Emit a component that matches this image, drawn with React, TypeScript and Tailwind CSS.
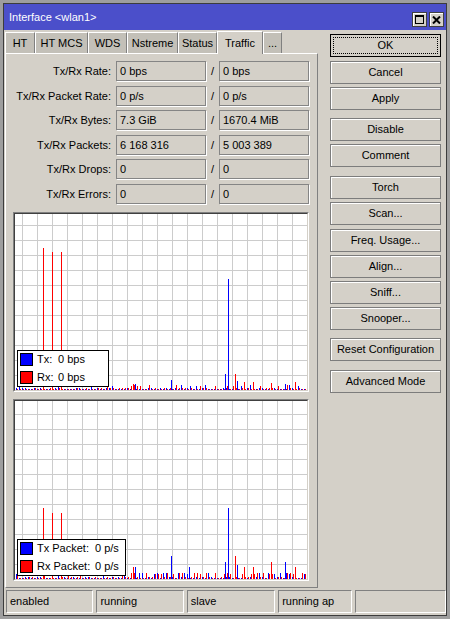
import React from 'react';

type Bar = { x: number; h: number; c: 'b' | 'r' };

function makeBars(seed: number, W: number, prob: number, smallH: number, spikes: Bar[], leftLow: number): Bar[] {
  let s = seed;
  const rnd = () => {
    s = (s * 16807) % 2147483647;
    return s / 2147483647;
  };
  const out: Bar[] = [];
  for (let x = 1; x < W - 1; x += 3) {
    const p = x < leftLow ? prob * 0.4 : prob;
    const hb = rnd() < p ? smallH + Math.floor(rnd() * 2) : 1 + Math.floor(rnd() * 1.6);
    const hr = rnd() < p ? smallH + Math.floor(rnd() * 2) : 1 + Math.floor(rnd() * 1.6);
    out.push({ x, h: hb, c: 'b' });
    out.push({ x: x + 1, h: hr, c: 'r' });
  }
  return [...out, ...spikes];
}

const bars1 = makeBars(
  12345,
  292,
  0.18,
  4,
  [
    { x: 28, h: 142, c: 'r' },
    { x: 37, h: 138, c: 'r' },
    { x: 46, h: 138, c: 'r' },
    { x: 213, h: 111, c: 'b' },
    { x: 156, h: 10, c: 'b' },
    { x: 210, h: 16, c: 'b' },
    { x: 220, h: 16, c: 'r' },
    { x: 222, h: 9, c: 'b' },
    { x: 229, h: 8, c: 'r' },
    { x: 238, h: 8, c: 'r' },
    { x: 256, h: 7, c: 'r' },
    { x: 280, h: 8, c: 'r' },
    { x: 270, h: 6, c: 'b' },
    { x: 118, h: 6, c: 'r' },
    { x: 120, h: 6, c: 'b' },
  ],
  96
);

const bars2 = makeBars(
  777,
  292,
  0.35,
  5,
  [
    { x: 28, h: 71, c: 'r' },
    { x: 37, h: 66, c: 'r' },
    { x: 46, h: 66, c: 'r' },
    { x: 213, h: 71, c: 'b' },
    { x: 156, h: 23, c: 'b' },
    { x: 210, h: 17, c: 'b' },
    { x: 220, h: 23, c: 'r' },
    { x: 222, h: 14, c: 'b' },
    { x: 229, h: 12, c: 'r' },
    { x: 238, h: 12, c: 'r' },
    { x: 256, h: 17, c: 'r' },
    { x: 270, h: 17, c: 'b' },
    { x: 280, h: 12, c: 'r' },
    { x: 174, h: 12, c: 'b' },
    { x: 118, h: 12, c: 'r' },
    { x: 120, h: 12, c: 'b' },
  ],
  110
);

function ChartSvg({ W, H, bars }: { W: number; H: number; bars: Bar[] }) {
  const vx: number[] = [];
  for (let x = W - 15; x > 0; x -= 15) vx.push(x);
  const hy: number[] = [];
  for (let y = H - 15; y > 0; y -= 15) hy.push(y);
  return (
    <svg width={W} height={H} className="block">
      <rect x={0} y={0} width={W} height={H} fill="#ffffff" />
      {vx.map((x) => (
        <rect key={'v' + x} x={x} y={0} width={1} height={H} fill="#cccccc" />
      ))}
      {hy.map((y) => (
        <rect key={'h' + y} x={0} y={y} width={W} height={1} fill="#cccccc" />
      ))}
      {bars.map((b, i) => (
        <rect key={i} x={b.x} y={H - b.h} width={1} height={b.h} fill={b.c === 'b' ? '#0000ff' : '#ff0000'} />
      ))}
    </svg>
  );
}

function Legend({ rows, labelW, w }: { rows: [string, string, string][]; labelW: string; w: string }) {
  return (
    <div className={'absolute left-[2px] bottom-[3px] border border-black bg-white p-[2px] flex flex-col gap-[5px] ' + w}>
      {rows.map(([lab, val, col]) => (
        <div key={lab} className="flex items-center h-[13px]">
          <div className={'w-[13px] h-[13px] border border-black ' + col} />
          <div className={'ml-[4px] text-[11px] leading-none ' + labelW}>{lab}</div>
          <div className="text-[11px] leading-none">{val}</div>
        </div>
      ))}
    </div>
  );
}

function Field({ v }: { v: string }) {
  return (
    <div className="w-[90px] h-[20px] border border-[#858585] shadow-[1px_1px_0_#ffffff] bg-[#d4d0c8] flex items-center pl-[3px] text-[11px]">
      {v}
    </div>
  );
}

function Btn({ label, m }: { label: string; m: string }) {
  return (
    <div className={'h-[23px] border border-[#7c7c7c] bg-[#d4d0c8] shadow-[inset_1px_1px_0_#ffffff] flex items-center justify-center text-[11px] ' + m}>
      {label}
    </div>
  );
}

const rows: [string, string, string, string][] = [
  ['Tx/Rx Rate:', '0 bps', '0 bps', 'mt-0'],
  ['Tx/Rx Packet Rate:', '0 p/s', '0 p/s', 'mt-[5px]'],
  ['Tx/Rx Bytes:', '7.3 GiB', '1670.4 MiB', 'mt-[4px]'],
  ['Tx/Rx Packets:', '6 168 316', '5 003 389', 'mt-[5px]'],
  ['Tx/Rx Drops:', '0', '0', 'mt-[4px]'],
  ['Tx/Rx Errors:', '0', '0', 'mt-[5px]'],
];

const tabs: { t: string; w: string; sel?: boolean }[] = [
  { t: 'HT', w: 'w-[30px]' },
  { t: 'HT MCS', w: 'w-[53px]' },
  { t: 'WDS', w: 'w-[39px]' },
  { t: 'Nstreme', w: 'w-[51px]' },
  { t: 'Status', w: 'w-[39px]' },
  { t: 'Traffic', w: 'w-[46px]', sel: true },
  { t: '...', w: 'w-[19px]' },
];

const buttons: [string, string][] = [
  ['Cancel', 'mt-[4px]'],
  ['Apply', 'mt-[3px]'],
  ['Disable', 'mt-[8px]'],
  ['Comment', 'mt-[3px]'],
  ['Torch', 'mt-[9px]'],
  ['Scan...', 'mt-[3px]'],
  ['Freq. Usage...', 'mt-[4px]'],
  ['Align...', 'mt-[3px]'],
  ['Sniff...', 'mt-[3px]'],
  ['Snooper...', 'mt-[3px]'],
  ['Reset Configuration', 'mt-[8px]'],
  ['Advanced Mode', 'mt-[9px]'],
];

export default function App() {
  return (
    <div className="w-[450px] h-[619px] bg-[#9e9e9e] p-[3px] text-black [font-family:'Liberation_Sans',Arial,sans-serif]">
      <div className="w-full h-full border border-[#3c3c3c] bg-[#d4d0c8] flex flex-col">
        {/* title */}
        <div className="h-[26px] bg-[#4b4fca] flex items-center pl-[5px] pr-[2px]">
          <div className="text-white text-[11px] flex-1">Interface &lt;wlan1&gt;</div>
          <div className="flex gap-[2px] mt-[5px]">
            <div className="w-[15px] h-[15px] bg-[#d4d0c8] border border-[#404040] shadow-[inset_1px_1px_0_#ffffff] flex items-center justify-center">
              <svg width="9" height="9" viewBox="0 0 9 9">
                <rect x="0.5" y="0.5" width="8" height="8" fill="none" stroke="#000" />
                <rect x="0" y="0" width="9" height="2" fill="#000" />
              </svg>
            </div>
            <div className="w-[15px] h-[15px] bg-[#d4d0c8] border border-[#404040] shadow-[inset_1px_1px_0_#ffffff] flex items-center justify-center">
              <svg width="9" height="8" viewBox="0 0 9 8">
                <path d="M1 0.5 L8 7.5 M8 0.5 L1 7.5" stroke="#000" strokeWidth="2" />
              </svg>
            </div>
          </div>
        </div>
        {/* body */}
        <div className="flex-1 flex flex-col">
          <div className="flex">
            <div className="w-[314px] pl-[1px] flex flex-col">
              <div className="mt-[1px] h-[22px] flex items-end">
                {tabs.map((t) =>
                  t.sel ? (
                    <div
                      key={t.t}
                      className={'relative z-10 -mb-[1px] h-[23px] bg-[#d4d0c8] border-t border-l border-white border-r border-r-[#808080] flex items-start justify-center pt-[3px] text-[11px] ' + t.w}
                    >
                      {t.t}
                    </div>
                  ) : (
                    <div
                      key={t.t}
                      className={'h-[21px] bg-[#c3c0b8] border-t border-l border-white border-r border-r-[#808080] flex items-center justify-center text-[11px] ' + t.w}
                    >
                      {t.t}
                    </div>
                  )
                )}
              </div>
              <div className="h-[535px] border-t border-l border-white border-r border-b border-r-[#808080] border-b-[#808080] pt-[7px]">
                <div className="flex flex-col">
                  {rows.map(([l, a, b, m]) => (
                    <div key={l} className={'flex items-center h-[20px] ' + m}>
                      <div className="w-[105px] text-right text-[11px]">{l}</div>
                      <div className="ml-[5px]">
                        <Field v={a} />
                      </div>
                      <div className="w-[13px] text-center text-[11px]">/</div>
                      <Field v={b} />
                    </div>
                  ))}
                </div>
                <div className="mt-[8px] ml-[7px] w-[296px] h-[180px] border-t border-l border-[#808080] border-b border-r border-b-white border-r-white">
                  <div className="relative w-full h-full border-t border-l border-[#404040] border-b border-r border-b-[#d4d0c8] border-r-[#d4d0c8]">
                    <ChartSvg W={292} H={176} bars={bars1} />
                    <Legend
                      w="w-[92px]"
                      labelW="w-[21px]"
                      rows={[
                        ['Tx:', '0 bps', 'bg-[#0000ff]'],
                        ['Rx:', '0 bps', 'bg-[#ff0000]'],
                      ]}
                    />
                  </div>
                </div>
                <div className="mt-[7px] ml-[7px] w-[296px] h-[182px] border-t border-l border-[#808080] border-b border-r border-b-white border-r-white">
                  <div className="relative w-full h-full border-t border-l border-[#404040] border-b border-r border-b-[#d4d0c8] border-r-[#d4d0c8]">
                    <ChartSvg W={292} H={178} bars={bars2} />
                    <Legend
                      w="w-[109px]"
                      labelW="w-[58px]"
                      rows={[
                        ['Tx Packet:', '0 p/s', 'bg-[#0000ff]'],
                        ['Rx Packet:', '0 p/s', 'bg-[#ff0000]'],
                      ]}
                    />
                  </div>
                </div>
              </div>
            </div>
            <div className="ml-[12px] w-[111px] mt-[4px] flex flex-col">
              <div className="h-[23px] border border-black bg-[#d4d0c8] p-[2px]">
                <div className="w-full h-full border border-dotted border-black flex items-center justify-center text-[11px]">OK</div>
              </div>
              {buttons.map(([l, m]) => (
                <Btn key={l} label={l} m={m} />
              ))}
            </div>
          </div>
          {/* status bar */}
          <div className="mt-[2px] pl-[2px] flex gap-[3px]">
            {[
              ['enabled', 'w-[88px]'],
              ['running', 'w-[88px]'],
              ['slave', 'w-[89px]'],
              ['running ap', 'w-[74px]'],
              ['', 'w-[92px]'],
            ].map(([t, w], i) => (
              <div
                key={i}
                className={'h-[23px] border-t border-l border-[#808080] border-b border-r border-b-white border-r-white flex items-center pl-[3px] text-[11px] ' + w}
              >
                {t}
              </div>
            ))}
          </div>
        </div>
      </div>
    </div>
  );
}
